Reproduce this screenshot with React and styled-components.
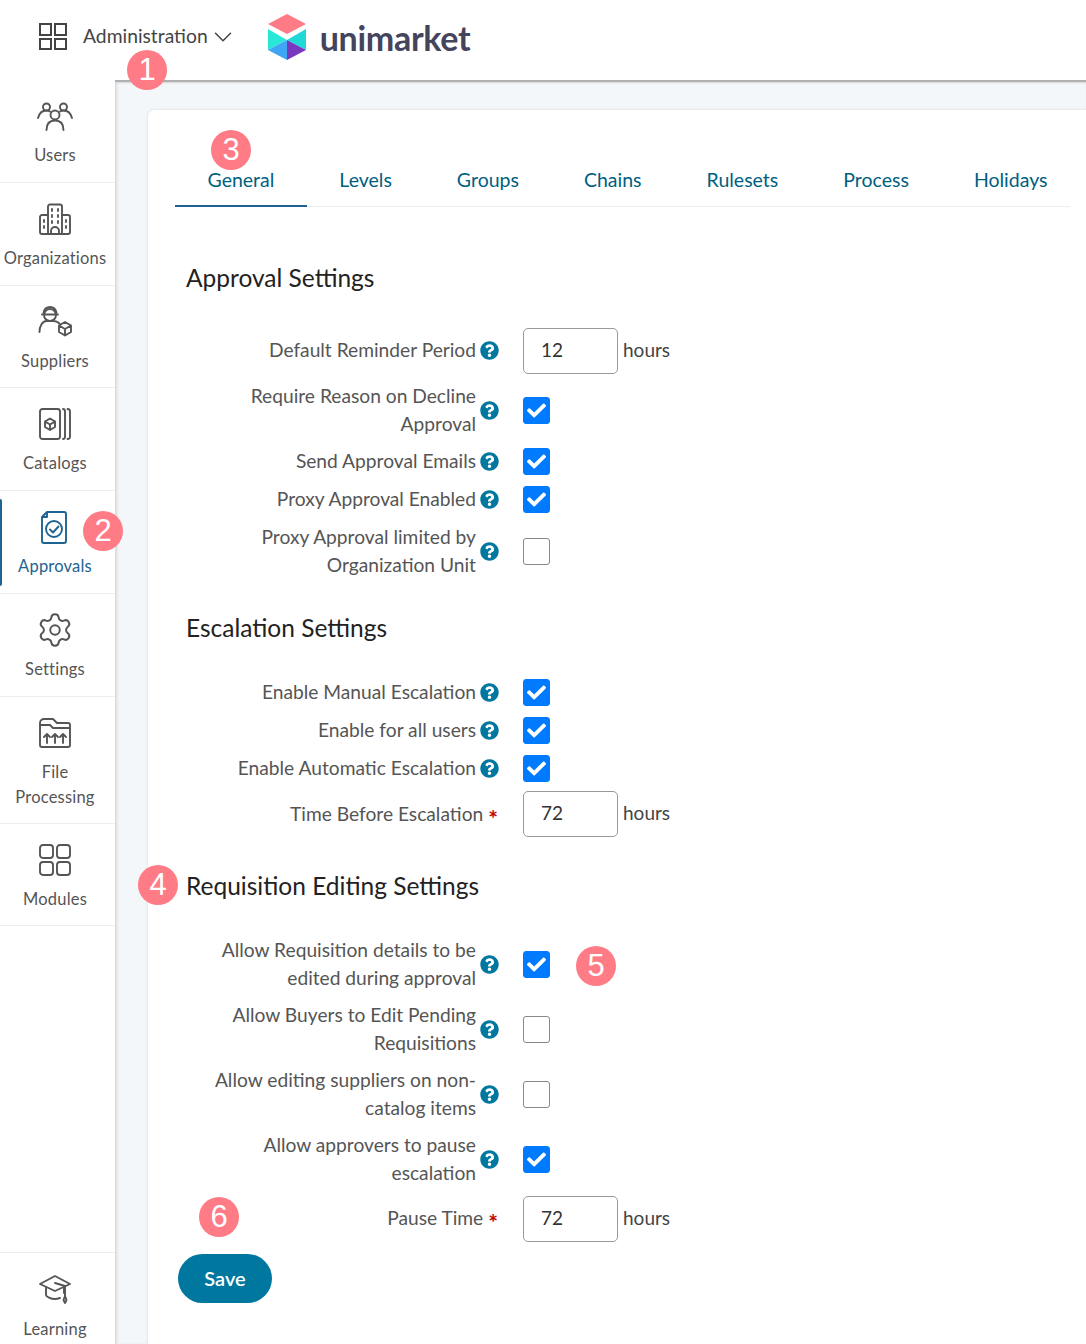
import React from "react";
import styled, { createGlobalStyle } from "styled-components";
import { FaQuestionCircle, FaCheck } from "react-icons/fa";
import { ChevronDown, Settings } from "lucide-react";

const FONT = `"Lato", "Open Sans", sans-serif`;

const navItems = [
  { key: "users", label: ["Users"] },
  { key: "orgs", label: ["Organizations"] },
  { key: "suppliers", label: ["Suppliers"] },
  { key: "catalogs", label: ["Catalogs"] },
  { key: "approvals", label: ["Approvals"], active: true },
  { key: "settings", label: ["Settings"] },
  { key: "files", label: ["File", "Processing"], tall: true },
  { key: "modules", label: ["Modules"] },
];

const tabs = ["General", "Levels", "Groups", "Chains", "Rulesets", "Process", "Holidays"];

const badges = [
  { n: 1, x: 147, y: 70 },
  { n: 2, x: 103, y: 531 },
  { n: 3, x: 231, y: 150 },
  { n: 4, x: 158, y: 885 },
  { n: 5, x: 596, y: 966 },
  { n: 6, x: 219, y: 1217 },
];

const sections = [
  {
    title: "Approval Settings",
    gap: 56,
    rows: [
      { label: "Default Reminder Period", help: true, hours: "12" },
      { label: "Require Reason on Decline Approval", help: true, checked: true },
      { label: "Send Approval Emails", help: true, checked: true },
      { label: "Proxy Approval Enabled", help: true, checked: true },
      { label: "Proxy Approval limited by Organization Unit", help: true },
    ],
  },
  {
    title: "Escalation Settings",
    gap: 33,
    rows: [
      { label: "Enable Manual Escalation", help: true, checked: true },
      { label: "Enable for all users", help: true, checked: true },
      { label: "Enable Automatic Escalation", help: true, checked: true },
      { label: "Time Before Escalation", required: true, hours: "72" },
    ],
  },
  {
    title: "Requisition Editing Settings",
    gap: 34,
    rows: [
      { label: "Allow Requisition details to be edited during approval", help: true, checked: true },
      { label: "Allow Buyers to Edit Pending Requisitions", help: true },
      { label: "Allow editing suppliers on non-catalog items", help: true },
      { label: "Allow approvers to pause escalation", help: true, checked: true },
      { label: "Pause Time", required: true, hours: "72" },
    ],
  },
];

function NavIcon({ name }) {
  const paths = {
    users: (
      <>
        <circle cx="16" cy="15" r="4.5" />
        <path d="M7.500 30c0-6 3-9.500 8.500-9.500s8.500 3.500 8.500 9.500" />
        <circle cx="7.500" cy="7" r="3.500" />
        <circle cx="24.500" cy="7" r="3.500" />
        <path d="M-1 18c1-4 4-7.500 8.500-7.500 1.500 0 2.500.3 3.500 1M21 11.500c1-.7 2-1 3.500-1 4.500 0 7.500 3.500 8.500 7.500" />
      </>
    ),
    orgs: (
      <>
        <path d="M9 31V3.500a2 2 0 0 1 2-2h10a2 2 0 0 1 2 2V31" />
        <path d="M9 12H3a2 2 0 0 0-2 2v15a2 2 0 0 0 2 2h26a2 2 0 0 0 2-2V14a2 2 0 0 0-2-2h-6" />
        <path d="M13 6v2M19 6v2M13 12v2M19 12v2M13 18v2M19 18v2M5 17v2M5 23v2M27 17v2M27 23v2M12 31v-3a4 4 0 0 1 8 0v3" />
      </>
    ),
    suppliers: (
      <>
        <circle cx="11" cy="9" r="6" />
        <path d="M4.500 6.500c1-4 3.500-5.500 6.500-5.500s5.500 1.500 6.500 5.500M3 8.500h16" />
        <path d="M0.500 26c0-6 3-11 7-11h7c2.500 0 4.500 1 6 2.500" />
        <path d="M26 16l6 3.500v6.500l-6 3.500-6-3.500v-6.500zM20 19.500l6 3.500 6-3.500M26 23v6.500" />
      </>
    ),
    catalogs: (
      <>
        <rect x="1" y="1" width="20" height="30" rx="2.500" />
        <path d="M24 1c1.500 0 2 1 2 2.500v25c0 1.500-.5 2.500-2 2.500M28.500 1c1.500 0 2.500 1 2.500 2.500v25c0 1.500-1 2.500-2.500 2.500" />
        <path d="M11 10.500l5 3v5.500l-5 3-5-3v-5.500zM6 13.500l5 3 5-3M11 16.500v5.500" />
      </>
    ),
    approvals: (
      <>
        <path d="M8 1h17a2 2 0 0 1 2 2v27a2 2 0 0 1-2 2H5a2 2 0 0 1-2-2V6zM8 1v5H3" />
        <circle cx="15" cy="18" r="8" />
        <path d="M11 18.500l3 3 5.500-6" />
      </>
    ),
    settings: <Settings x={-3} y={-3} size={38} strokeWidth={1.25} />,
    files: (
      <>
        <path d="M1 6V28a2 2 0 0 0 2 2h26a2 2 0 0 0 2-2V8a2 2 0 0 0-2-2H18l-4-4H5a4 4 0 0 0-4 4zM1 8h10l3 3h17" />
        <path d="M8 26v-9M5 20l3-3 3 3M16 26v-9M13 20l3-3 3 3M24 26v-9M21 20l3-3 3 3" />
      </>
    ),
    modules: (
      <>
        <rect x="1" y="1" width="13" height="13" rx="3" />
        <rect x="18" y="1" width="13" height="13" rx="3" />
        <rect x="1" y="18" width="13" height="13" rx="3" />
        <rect x="18" y="18" width="13" height="13" rx="3" />
      </>
    ),
    learning: (
      <>
        <path d="M16 2L31 10 16 17 1 10z" />
        <path d="M7 13.500V21c0 1.500 5 4 9 4 1.500 0 3-.3 5-1M25 13.500V19M16 9l10 3v10" />
        <path d="M26 22l1.500 4-1.500 3-1.500-3z" />
      </>
    ),
  };
  return (
    <NavSvg viewBox="0 0 32 32" fill="none" stroke="currentColor" strokeWidth="1.9" strokeLinecap="round" strokeLinejoin="round">
      {paths[name]}
    </NavSvg>
  );
}

function Logo() {
  return (
    <svg width="40" height="46" viewBox="0 0 40 46">
      <polygon points="20,0 39,10 20,20 1,10" fill="#ff7b85" />
      <polygon points="1,15 20,26 20,26 1,36" fill="#2ae8d8" />
      <polygon points="39,15 20,26 39,36" fill="#1fd8d8" />
      <polygon points="1,36 20,26 20,46" fill="#3ea6f5" />
      <polygon points="20,26 39,36 20,46" fill="#7a38c0" />
    </svg>
  );
}

function Row({ row }) {
  return (
    <FormRow>
      <Label $wide={row.required}>
        {row.label}
        {row.required && <Star>*</Star>}
      </Label>
      <HelpSlot $narrow={row.required}>{row.help && <FaQuestionCircle />}</HelpSlot>
      {row.hours ? (
        <>
          <NumberBox>{row.hours}</NumberBox>
          <Unit>hours</Unit>
        </>
      ) : (
        <Check $on={row.checked}>{row.checked && <FaCheck />}</Check>
      )}
    </FormRow>
  );
}

export default function App() {
  return (
    <Page>
      <GlobalStyle />
      <Header>
        <svg width="28" height="28" viewBox="0 0 28 28" fill="none" stroke="#444" strokeWidth="2">
          <rect x="1" y="1" width="11" height="11" />
          <rect x="16" y="1" width="11" height="11" />
          <rect x="1" y="16" width="11" height="10" />
          <rect x="16" y="16" width="11" height="10" />
        </svg>
        <MenuTitle>Administration</MenuTitle>
        <Chevron size={30} strokeWidth={1.2} color="#444" />
        <LogoWrap>
          <Logo />
          <LogoText>unimarket</LogoText>
        </LogoWrap>
      </Header>
      <Body>
        <Sidebar>
          <NavList>
            {navItems.map((item) => (
              <NavItem key={item.key} $active={item.active} $tall={item.tall}>
                <NavIcon name={item.key} />
                <NavLabel>
                  {item.label.map((line) => (
                    <span key={line}>{line}</span>
                  ))}
                </NavLabel>
              </NavItem>
            ))}
          </NavList>
          <NavFooter>
            <NavIcon name="learning" />
            <NavLabel>
              <span>Learning</span>
              <span>Center</span>
            </NavLabel>
          </NavFooter>
        </Sidebar>
        <Main>
          <Card>
            <TabBar>
              {tabs.map((tab, i) => (
                <Tab key={tab} $active={i === 0}>
                  {tab}
                </Tab>
              ))}
            </TabBar>
            {sections.map((section) => (
              <Section key={section.title} $gap={section.gap}>
                <Heading>{section.title}</Heading>
                <Rows>
                  {section.rows.map((row) => (
                    <Row key={row.label} row={row} />
                  ))}
                </Rows>
              </Section>
            ))}
            <SaveButton>Save</SaveButton>
          </Card>
        </Main>
      </Body>
      {badges.map((b) => (
        <Badge key={b.n} $x={b.x} $y={b.y}>
          {b.n}
        </Badge>
      ))}
    </Page>
  );
}

const GlobalStyle = createGlobalStyle`
  html, body {
    margin: 0;
    padding: 0;
    background: #fff;
  }
  * {
    box-sizing: border-box;
  }
`;

const Page = styled.div`
  position: relative;
  width: 1086px;
  height: 1344px;
  overflow: hidden;
  font-family: ${FONT};
  color: #555;
`;

const Header = styled.header`
  height: 80px;
  display: flex;
  align-items: center;
  padding: 0 0 6px 39px;
  color: #444;
`;

const MenuTitle = styled.span`
  margin: 0 0 4px 16px;
  font-size: 19.3px;
`;

const Chevron = styled(ChevronDown)`
  flex: none;
  margin-right: -4px;
`;

const LogoWrap = styled.div`
  display: flex;
  align-items: center;
  margin-left: 33px;
`;

const LogoText = styled.span`
  margin-left: 13px;
  font-size: 34px;
  font-weight: 700;
  color: #44445c;
  letter-spacing: -0.3px;
`;

const Body = styled.div`
  display: flex;
  height: 1264px;
`;

const Sidebar = styled.nav`
  width: 115px;
  flex: none;
  display: flex;
  flex-direction: column;
  justify-content: space-between;
  height: 1264px;
`;

const NavList = styled.div`
  display: flex;
  flex-direction: column;
`;

const NavSvg = styled.svg`
  flex: none;
  width: 32px;
  height: 32px;
  overflow: visible;
`;

const NavItem = styled.div`
  position: relative;
  flex: none;
  height: ${(p) => (p.$tall ? "127px" : "102.75px")};
  display: flex;
  flex-direction: column;
  align-items: center;
  padding-top: 20px;
  padding-right: 5px;
  gap: 11px;
  border-bottom: 1px solid #eceef0;
  color: ${(p) => (p.$active ? "#1f6391" : "#555")};
  ${(p) =>
    p.$active &&
    `&::before {
      content: "";
      position: absolute;
      left: 0;
      top: 8px;
      bottom: 7px;
      width: 2px;
      border-radius: 0 2px 2px 0;
      background: #1f6391;
    }`}
`;

const NavFooter = styled(NavItem)`
  height: 92px;
  padding-top: 21px;
  border-top: 1px solid #eceef0;
  border-bottom: none;
`;

const NavLabel = styled.div`
  flex: none;
  display: flex;
  flex-direction: column;
  align-items: center;
  font-size: 16.5px;
  letter-spacing: 0.2px;
  line-height: 25px;
`;

const Main = styled.main`
  flex: 1;
  min-width: 0;
  background: #f4f7fa;
  border-top: 2px solid #b0b0b0;
  box-shadow: inset 3px 0 3px -1px #d8d8d8, inset 0 2px 2px -1px #d8d8d8;
  padding: 28px 0 0 33px;
  overflow: hidden;
`;

const Card = styled.div`
  width: 1000px;
  height: 1300px;
  padding: 0 27px;
  background: #fff;
  border-radius: 6px 0 0 0;
  box-shadow: 0 0 3px rgba(0, 0, 0, 0.12);
`;

const TabBar = styled.div`
  display: flex;
  width: 895px;
  height: 97px;
  align-items: flex-end;
  border-bottom: 1px solid #eeeeee;
`;

const Tab = styled.div`
  padding: 0 32.5px 15px;
  height: 39px;
  margin-bottom: -1px;
  font-size: 19.5px;
  line-height: 24px;
  white-space: nowrap;
  color: #005f7f;
  border-bottom: 2px solid ${(p) => (p.$active ? "#1f6391" : "transparent")};
`;

const Section = styled.section`
  padding-left: 11px;
  margin-top: ${(p) => p.$gap}px;
`;

const Heading = styled.h2`
  margin: 0 0 34.5px;
  font-size: 24.5px;
  line-height: 30px;
  font-weight: 400;
  color: #222;
`;

const Rows = styled.div`
  display: flex;
  flex-direction: column;
  gap: 8px;
`;

const FormRow = styled.div`
  display: flex;
  align-items: center;
  min-height: 30px;
`;

const Label = styled.div`
  width: ${(p) => (p.$wide ? "312px" : "290px")};
  text-align: right;
  font-size: 19.2px;
  line-height: 28.5px;
  color: #555;
`;

const Star = styled.span`
  margin-left: 5px;
  font-size: 23px;
  font-weight: 700;
  line-height: 20px;
  vertical-align: -6px;
  color: #c00000;
`;

const HelpSlot = styled.div`
  width: ${(p) => (p.$narrow ? "25px" : "47px")};
  padding-left: 4px;
  display: flex;
  align-items: center;
  color: #00779f;
  font-size: 19px;
`;

const NumberBox = styled.div`
  width: 95px;
  height: 46px;
  padding: 0 0 3px 17px;
  display: flex;
  align-items: center;
  border: 1px solid #999;
  border-radius: 5px;
  font-size: 19px;
  color: #333;
`;

const Unit = styled.span`
  margin: 0 0 3px 5px;
  font-size: 19px;
  color: #444;
`;

const Check = styled.div`
  width: 27px;
  height: 27px;
  display: flex;
  align-items: center;
  justify-content: center;
  border-radius: 3px;
  color: #fff;
  font-size: 19px;
  background: ${(p) => (p.$on ? "#007bff" : "#fff")};
  border: 1px solid ${(p) => (p.$on ? "#007bff" : "#888")};
`;

const SaveButton = styled.button`
  display: block;
  margin: 12px 0 0 3px;
  width: 94px;
  height: 49px;
  border: none;
  border-radius: 25px;
  background: #00779f;
  color: #fff;
  font-family: ${FONT};
  font-size: 20px;
  font-weight: 600;
`;

const Badge = styled.div`
  position: absolute;
  left: ${(p) => p.$x - 20}px;
  top: ${(p) => p.$y - 20}px;
  width: 40px;
  height: 40px;
  border-radius: 50%;
  background: #ff7b85;
  color: #fff;
  display: flex;
  align-items: center;
  justify-content: center;
  font-family: "Liberation Sans", sans-serif;
  font-size: 31px;
`;
